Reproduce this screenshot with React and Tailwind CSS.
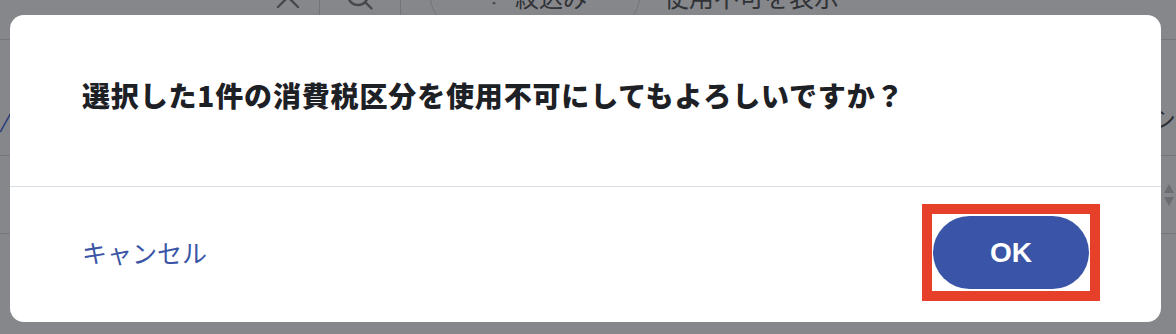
import React from "react";

const jp = { fontFamily: '"Noto Sans CJK JP", "Noto Sans", sans-serif' };

const Toolbar = () => (
  <div className="flex h-[50px] -mt-[28px] items-center text-[#303236]">
    <div className="w-[257px]" />
    {/* close */}
    <div className="flex w-[62px] justify-center">
      <svg width="28" height="28" viewBox="0 0 28 28" fill="none" stroke="#45484d" strokeWidth="2.4" strokeLinecap="round">
        <path d="M4 4l20 20M24 4L4 24" />
      </svg>
    </div>
    <div className="h-[50px] w-px bg-[#727478]" />
    {/* search */}
    <div className="flex w-[80px] justify-center">
      <svg width="30" height="30" viewBox="0 0 30 30" fill="none" stroke="#45484d" strokeWidth="2.4" strokeLinecap="round">
        <circle cx="13" cy="13" r="10" />
        <path d="M20.5 20.5l6 6" />
      </svg>
    </div>
    <div className="h-[50px] w-px bg-[#727478]" />
    <div className="w-[29px]" />
    {/* filter pill */}
    <div className="flex h-[60px] w-[210px] items-center gap-[14px] rounded-full border border-[#727478] pl-[56px]">
      <svg width="14" height="16" viewBox="0 0 14 16" fill="#45484d">
        <rect x="1" y="3" width="12" height="2.2" rx="1" />
        <rect x="3.5" y="8" width="7" height="2.2" rx="1" />
        <rect x="5.5" y="13" width="3" height="2.2" rx="1" />
      </svg>
      <span className="text-[24px]" style={jp}>絞込み</span>
    </div>
    <span className="ml-[24px] text-[25px]" style={jp}>使用不可を表示</span>
  </div>
);

const BackgroundRows = () => (
  <div className="flex flex-col">
    <div className="mt-[17px] h-px bg-[#75777b]" />
    <div className="flex h-[115px] items-center justify-between pt-[40px]">
      <span className="text-[24px] italic text-[#253a78]" style={jp}>/</span>
      <span className="text-[24px] text-[#2d2f33]" style={jp}>シ</span>
    </div>
    <div className="h-px bg-[#75777b]" />
    <div className="flex h-[77px] items-center justify-end pr-[1px]">
      <svg width="12" height="26" viewBox="0 0 12 26" fill="#6b6d72">
        <path d="M6 2l5 9H1z" />
        <path d="M6 24l5-9H1z" />
      </svg>
    </div>
    <div className="h-px bg-[#75777b]" />
  </div>
);

export default function App() {
  return (
    <div className="relative h-[334px] w-[1176px] overflow-hidden bg-[#86878b]" style={jp}>
      <Toolbar />
      <BackgroundRows />

      {/* modal */}
      <div className="absolute left-[10px] top-[15px] flex h-[307px] w-[1151px] flex-col rounded-[14px] bg-white">
        <div className="flex h-[171px] items-center pb-[12px] pl-[72px]">
          <h2 className="text-[28px] font-black tracking-[0.03em] text-[#1d2025]">
            選択した1件の消費税区分を使用不可にしてもよろしいですか？
          </h2>
        </div>
        <div className="h-px bg-[#d9dee6]" />
        <div className="flex flex-1 items-center justify-between pb-[4px] pl-[72px] pr-[61px]">
          <button className="text-[25px] text-[#3a55a6]">キャンセル</button>
          <div className="border-[10px] border-[#e6402a] px-px py-[2px]">
            <button className="flex h-[73px] w-[156px] items-center justify-center rounded-full bg-[#3a55a7] text-[28px] font-bold text-white" style={{ fontFamily: '"Liberation Sans", Arial, sans-serif' }}>
              OK
            </button>
          </div>
        </div>
      </div>
    </div>
  );
}
